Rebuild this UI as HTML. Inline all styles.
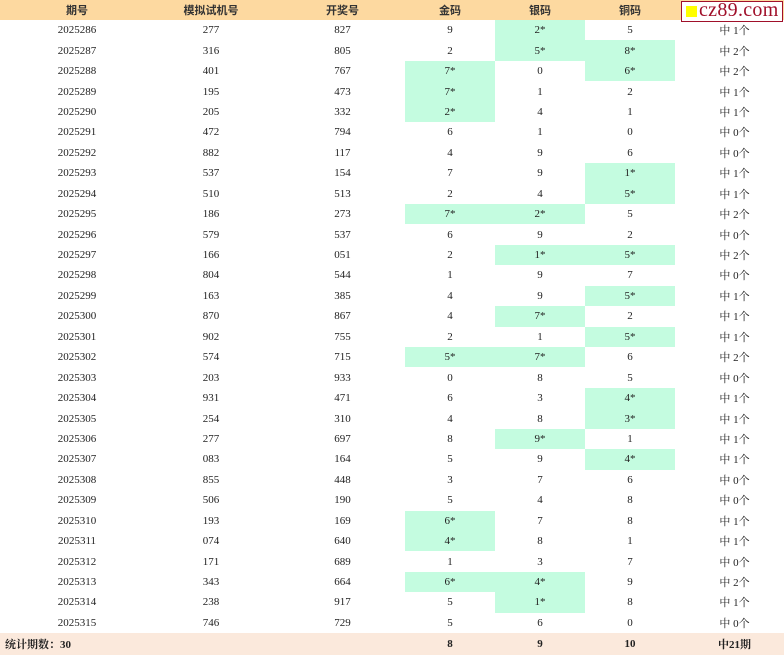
<!DOCTYPE html><html><head><meta charset="utf-8"><style>
*{margin:0;padding:0}
body{width:784px;height:656px;background:#fff;overflow:hidden;position:relative;font-family:"Liberation Serif","Noto Serif CJK SC",serif;font-size:11px;color:#222}
table{border-collapse:collapse;table-layout:fixed;width:784px;position:absolute;left:0;top:0}
td,th{text-align:center;padding:0;white-space:nowrap;overflow:hidden}
td:nth-child(3){padding-left:12px}
td:nth-child(7){padding-left:10px}
thead th{height:20px;background:#fdd9a0;font-weight:bold;font-family:"Liberation Sans","Noto Sans CJK SC",sans-serif;font-size:11px;color:#333}
thead th:nth-child(3){padding-left:12px}
tbody td{height:20.45px}
.h{background:#c4fce0}
tfoot td{height:22px;background:#fbe9dc;font-weight:bold}
.logo{position:absolute;left:681px;top:1px;width:100px;height:19px;border:1px solid #a0102a;background:#fff}
.logo i{position:absolute;left:4px;top:4px;width:11px;height:11px;background:#ffff00}
.logo span{position:absolute;left:17px;top:-3px;font-family:"Liberation Serif",serif;font-size:20px;color:#a0102a;letter-spacing:0.3px}
</style></head><body>
<table>
<colgroup><col style="width:154px"><col style="width:114px"><col style="width:137px"><col style="width:90px"><col style="width:90px"><col style="width:90px"><col style="width:109px"></colgroup>
<thead><tr><th>期号</th><th>模拟试机号</th><th>开奖号</th><th>金码</th><th>银码</th><th>铜码</th><th></th></tr></thead>
<tbody>
<tr><td>2025286</td><td>277</td><td>827</td><td>9</td><td class="h">2*</td><td>5</td><td>中 1个</td></tr>
<tr><td>2025287</td><td>316</td><td>805</td><td>2</td><td class="h">5*</td><td class="h">8*</td><td>中 2个</td></tr>
<tr><td>2025288</td><td>401</td><td>767</td><td class="h">7*</td><td>0</td><td class="h">6*</td><td>中 2个</td></tr>
<tr><td>2025289</td><td>195</td><td>473</td><td class="h">7*</td><td>1</td><td>2</td><td>中 1个</td></tr>
<tr><td>2025290</td><td>205</td><td>332</td><td class="h">2*</td><td>4</td><td>1</td><td>中 1个</td></tr>
<tr><td>2025291</td><td>472</td><td>794</td><td>6</td><td>1</td><td>0</td><td>中 0个</td></tr>
<tr><td>2025292</td><td>882</td><td>117</td><td>4</td><td>9</td><td>6</td><td>中 0个</td></tr>
<tr><td>2025293</td><td>537</td><td>154</td><td>7</td><td>9</td><td class="h">1*</td><td>中 1个</td></tr>
<tr><td>2025294</td><td>510</td><td>513</td><td>2</td><td>4</td><td class="h">5*</td><td>中 1个</td></tr>
<tr><td>2025295</td><td>186</td><td>273</td><td class="h">7*</td><td class="h">2*</td><td>5</td><td>中 2个</td></tr>
<tr><td>2025296</td><td>579</td><td>537</td><td>6</td><td>9</td><td>2</td><td>中 0个</td></tr>
<tr><td>2025297</td><td>166</td><td>051</td><td>2</td><td class="h">1*</td><td class="h">5*</td><td>中 2个</td></tr>
<tr><td>2025298</td><td>804</td><td>544</td><td>1</td><td>9</td><td>7</td><td>中 0个</td></tr>
<tr><td>2025299</td><td>163</td><td>385</td><td>4</td><td>9</td><td class="h">5*</td><td>中 1个</td></tr>
<tr><td>2025300</td><td>870</td><td>867</td><td>4</td><td class="h">7*</td><td>2</td><td>中 1个</td></tr>
<tr><td>2025301</td><td>902</td><td>755</td><td>2</td><td>1</td><td class="h">5*</td><td>中 1个</td></tr>
<tr><td>2025302</td><td>574</td><td>715</td><td class="h">5*</td><td class="h">7*</td><td>6</td><td>中 2个</td></tr>
<tr><td>2025303</td><td>203</td><td>933</td><td>0</td><td>8</td><td>5</td><td>中 0个</td></tr>
<tr><td>2025304</td><td>931</td><td>471</td><td>6</td><td>3</td><td class="h">4*</td><td>中 1个</td></tr>
<tr><td>2025305</td><td>254</td><td>310</td><td>4</td><td>8</td><td class="h">3*</td><td>中 1个</td></tr>
<tr><td>2025306</td><td>277</td><td>697</td><td>8</td><td class="h">9*</td><td>1</td><td>中 1个</td></tr>
<tr><td>2025307</td><td>083</td><td>164</td><td>5</td><td>9</td><td class="h">4*</td><td>中 1个</td></tr>
<tr><td>2025308</td><td>855</td><td>448</td><td>3</td><td>7</td><td>6</td><td>中 0个</td></tr>
<tr><td>2025309</td><td>506</td><td>190</td><td>5</td><td>4</td><td>8</td><td>中 0个</td></tr>
<tr><td>2025310</td><td>193</td><td>169</td><td class="h">6*</td><td>7</td><td>8</td><td>中 1个</td></tr>
<tr><td>2025311</td><td>074</td><td>640</td><td class="h">4*</td><td>8</td><td>1</td><td>中 1个</td></tr>
<tr><td>2025312</td><td>171</td><td>689</td><td>1</td><td>3</td><td>7</td><td>中 0个</td></tr>
<tr><td>2025313</td><td>343</td><td>664</td><td class="h">6*</td><td class="h">4*</td><td>9</td><td>中 2个</td></tr>
<tr><td>2025314</td><td>238</td><td>917</td><td>5</td><td class="h">1*</td><td>8</td><td>中 1个</td></tr>
<tr><td>2025315</td><td>746</td><td>729</td><td>5</td><td>6</td><td>0</td><td>中 0个</td></tr>
</tbody>
<tfoot><tr><td style="text-align:left;padding-left:5px">统计期数：30</td><td></td><td></td><td>8</td><td>9</td><td>10</td><td>中21期</td></tr></tfoot>
</table>
<div class="logo"><i></i><span>cz89.com</span></div>
</body></html>
